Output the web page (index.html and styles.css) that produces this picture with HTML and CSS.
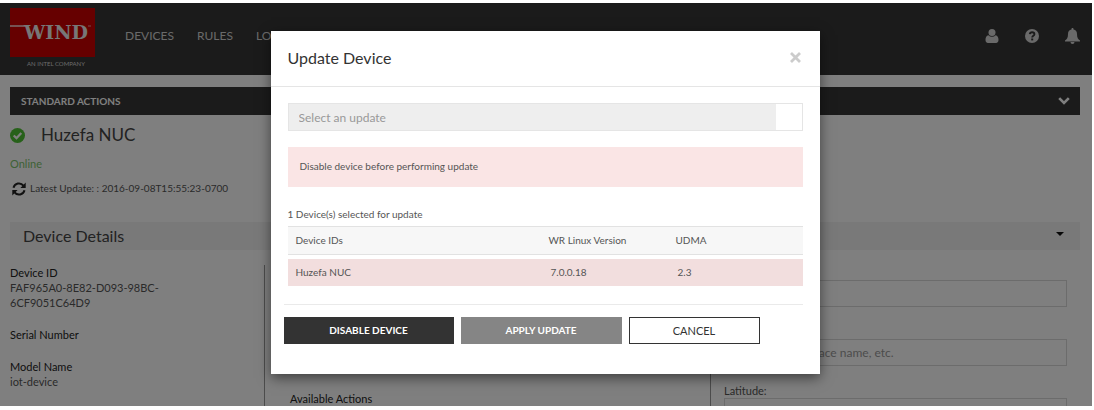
FILE: index.html
```html
<!DOCTYPE html>
<html lang="en">
<head>
<meta charset="utf-8">
<title>Update Device</title>
<link rel="stylesheet" href="styles.css">
</head>
<body>
<div class="app">
  <header class="topbar">
    <a class="brand" href="#">
      <svg class="brand-mark" viewBox="0 0 85 49" role="img" aria-label="Wind">
        <rect width="85" height="49" fill="#cc0000"/>
        <path d="M0 18H17" stroke="#fff" stroke-width="1.3"/>
        <text x="14" y="31" class="brand-word">WIND</text>
        <path d="M78 18h3" stroke="#fff" stroke-width="1" opacity=".6"/>
      </svg>
      <span class="brand-tag">AN INTEL COMPANY</span>
    </a>
    <nav class="nav">
      <a href="#">DEVICES</a>
      <a href="#">RULES</a>
      <a href="#">LO</a>
    </nav>
    <div class="tools">
      <button class="icon-button" aria-label="Account">
        <svg width="14" height="14" viewBox="0 0 14 14" fill="currentColor"><circle cx="7" cy="3.6" r="3.5"/><path d="M3.4 6.2C1.2 6.6.5 8.600.5 11c0 1.700.9 2.900 2.500 2.900h8c1.600 0 2.500-1.200 2.500-2.900 0-2.400-.7-4.400-2.900-4.800a5 5 0 0 1-7.200 0z"/></svg>
      </button>
      <button class="icon-button" aria-label="Help">
        <svg width="14" height="14" viewBox="0 0 14 14"><circle cx="7" cy="7" r="7" fill="currentColor"/><path d="M4.800 5.200C5 3.900 5.900 3.300 7.100 3.300c1.300 0 2.300.8 2.300 1.900 0 1.700-2.200 1.600-2.200 3.300" fill="none" stroke="#363636" stroke-width="1.900"/><rect x="6.200" y="9.500" width="2" height="1.900" fill="#363636"/></svg>
      </button>
      <button class="icon-button" aria-label="Notifications">
        <svg width="15" height="16" viewBox="0 0 15 16" fill="currentColor"><path d="M7.500 0c.6 0 1 .4 1 1v.6c2.300.4 3.500 2.200 3.500 4.400 0 3.800 1.100 5.400 3 6.500v.9H0v-.9c1.900-1.100 3-2.700 3-6.500 0-2.200 1.200-4 3.500-4.400V1c0-.6.4-1 1-1zM5.500 14h4a2 2 0 0 1-4 0z"/></svg>
      </button>
    </div>
  </header>

  <main class="content">
    <button class="actions-bar">
      <span>STANDARD ACTIONS</span>
      <svg width="12" height="8" viewBox="0 0 12 8" fill="none" stroke="#fff" stroke-width="2.600"><path d="M1.200 1.200 6 6l4.800-4.800"/></svg>
    </button>
    <div class="device-title">
      <svg width="15" height="15" viewBox="0 0 15 15"><circle cx="7.500" cy="7.500" r="7.500" fill="#4fc234"/><path d="M3.700 7.500 6.500 10.200 11.300 5" fill="none" stroke="#fff" stroke-width="2.300"/></svg>
      <h1>Huzefa NUC</h1>
    </div>
    <p class="status">Online</p>
    <p class="updated">
      <svg width="14" height="14" viewBox="0 0 14 14"><g fill="none" stroke="#222" stroke-width="2"><path d="M1.500 5.800A5.600 5.600 0 0 1 11.400 3.600"/><path d="M12.500 8.200A5.600 5.600 0 0 1 2.600 10.400"/></g><path d="M13.700.6v5.300H8.400zM.3 13.400V8.100h5.300z" fill="#222"/></svg>
      <span>Latest Update: : 2016-09-08T15:55:23-0700</span>
    </p>
    <button class="section-head">
      <span>Device Details</span>
      <svg width="8" height="4" viewBox="0 0 8 4"><path d="M0 0h8L4 4z" fill="#111"/></svg>
    </button>
    <div class="details">
      <dl class="col facts">
        <div><dt>Device ID</dt><dd>FAF965A0-8E82-D093-98BC-6CF9051C64D9</dd></div>
        <div><dt>Serial Number</dt><dd></dd></div>
        <div><dt>Model Name</dt><dd>iot-device</dd></div>
      </dl>
      <section class="col available">
        <h2>Available Actions</h2>
      </section>
      <form class="col location">
        <input class="field" type="text" aria-label="Name">
        <input class="field" type="text" aria-label="Place" placeholder="Enter address, place name, etc.">
        <div class="labelled">
          <label for="lat">Latitude:</label>
          <input class="field" id="lat" type="text">
        </div>
      </form>
    </div>
  </main>

  <div class="backdrop">
    <div class="modal" role="dialog" aria-labelledby="modal-title">
      <div class="modal-head">
        <h2 id="modal-title">Update Device</h2>
        <button class="close" aria-label="Close">
          <svg width="11" height="11" viewBox="0 0 11 11" stroke="#ccc" stroke-width="2.800"><path d="M1 1l9 9M10 1l-9 9"/></svg>
        </button>
      </div>
      <div class="modal-body">
        <div class="picker">
          <input type="text" aria-label="Update" placeholder="Select an update" disabled>
          <button aria-label="Show updates"></button>
        </div>
        <p class="alert">Disable device before performing update</p>
        <p class="count">1 Device(s) selected for update</p>
        <table class="devices">
          <thead>
            <tr><th class="c-id">Device IDs</th><th class="c-ver">WR Linux Version</th><th>UDMA</th></tr>
          </thead>
          <tbody>
            <tr class="gap"><td colspan="3"></td></tr>
            <tr class="row"><td>Huzefa NUC</td><td>7.0.0.18</td><td>2.3</td></tr>
          </tbody>
        </table>
      </div>
      <div class="modal-foot">
        <button class="btn dark">DISABLE DEVICE</button>
        <button class="btn muted">APPLY UPDATE</button>
        <button class="btn light">CANCEL</button>
      </div>
    </div>
  </div>
</div>
</body>
</html>
```
FILE: styles.css
```css
* { box-sizing: border-box; }

body {
  margin: 0;
  padding: 3px 2px 4px 0;
  background: #fff;
  color: #555;
  font: 12px/15px Lato, "Liberation Sans", sans-serif;
}

h1, h2, p, dl, dd { margin: 0; font-weight: 400; }
button, input { font: inherit; color: inherit; border-radius: 0; }
button { border: 0; padding: 0; background: none; }
a { color: inherit; text-decoration: none; }
svg { display: block; flex: none; }

.app {
  position: relative;
  height: calc(100vh - 7px);
  overflow: hidden;
  background: #fff;
}

.topbar {
  display: flex;
  height: 72px;
  padding: 5px 12px 0 10px;
  background: #363636;
  color: #d4d4d4;
}
.brand { width: 85px; }
.brand-mark { width: 85px; height: 49px; }
.brand-word { font: bold 19px "DejaVu Serif", serif; fill: #eee; }
.brand-tag {
  display: block;
  padding-left: 7px;
  font-size: 6px;
  line-height: 14px;
  text-align: center;
}
.nav { display: flex; gap: 23px; margin: 19px 0 0 30px; font-size: 12px; line-height: 17px; }
.tools { display: flex; align-items: center; gap: 26px; height: 56px; margin-left: auto; }

.content { padding: 12px 12px 0 10px; }
.actions-bar {
  display: flex;
  align-items: center;
  justify-content: space-between;
  width: 100%;
  height: 28px;
  padding: 0 10px 0 11px;
  background: #363636;
  color: #fff;
  font-size: 10px;
  font-weight: 700;
}
.device-title { display: flex; align-items: center; gap: 16px; height: 40px; }
h1 { color: #444; font-size: 17px; line-height: 20px; }
.status { margin-top: 1px; color: #7cc46c; font-size: 11px; }
.updated { display: flex; align-items: center; gap: 4px; margin-top: 10px; padding-left: 2px; font-size: 10px; }
.section-head {
  display: flex;
  align-items: center;
  justify-content: space-between;
  width: 100%;
  height: 28px;
  margin-top: 26px;
  padding: 0 16px 2px 13px;
  background: #f2f2f2;
  color: #444;
  font-size: 16px;
}
.section-head svg { margin-bottom: 2px; }
.details {
  display: grid;
  grid-template-columns: 255px 446px 1fr;
  margin-top: 15px;
}
.col { min-height: 160px; border-right: 1px solid #999; }
.col:last-child { border: 0; }
.facts { display: flex; flex-direction: column; gap: 17px; font-size: 11px; }
.facts dt { color: #222; }
.facts dd { max-width: 160px; overflow-wrap: break-word; }
.available { padding: 126px 25px 0; color: #222; }
.available h2 { font-size: 11px; line-height: 15px; }
.location { display: flex; flex-direction: column; gap: 32px; padding: 15px 13px 0; }
.field { display: block; width: 100%; height: 27px; padding: 0 7px; border: 1px solid #d8d8d8; background: #fff; }
.field::placeholder { color: #999; }
.labelled { display: flex; flex-direction: column; margin-top: -15px; }
.labelled label { font-size: 11px; }

.backdrop {
  position: absolute;
  inset: 0;
  display: flex;
  align-items: flex-start;
  justify-content: center;
  padding: 28px 2px 0 0;
  background: rgba(0, 0, 0, 0.5);
}
.modal {
  width: 549px;
  background: #fff;
  box-shadow: 0 4px 12px rgba(0, 0, 0, 0.5);
  font-size: 10px;
}
.modal-head {
  display: flex;
  align-items: center;
  justify-content: space-between;
  height: 56px;
  padding: 0 19px 2px 17px;
  border-bottom: 1px solid #e5e5e5;
}
.modal-head h2 { color: #333; font-size: 16px; line-height: 20px; }
.modal-body { padding: 16px 17px 0; }
.picker { display: flex; height: 28px; border: 1px solid #e5e5e5; }
.picker input { flex: 1; min-width: 0; padding: 0 10px; border: 0; background: #eee; font-size: 12px; }
.picker input::placeholder { color: #999; }
.picker button { width: 26px; }
.alert { margin-top: 16px; padding: 12px 12px 13px; background: #fae5e5; }
.count { margin-top: 20px; }
.devices { width: 100%; margin-top: 4px; border-collapse: collapse; table-layout: fixed; }
.devices th { height: 28px; padding: 0 8px; border: solid #e2e2e2; border-width: 1px 0; background: #f7f7f7; font-weight: 400; text-align: left; }
.devices .c-id { width: 253px; }
.devices .c-ver { width: 127px; }
.devices td { padding: 0 8px; }
.devices td + td { padding-left: 10px; }
.gap td { height: 4px; }
.row td { height: 27px; background: #f2dede; }
.modal-foot {
  display: flex;
  gap: 7px;
  margin: 18px 17px 0 13px;
  padding: 12px 0 30px;
  border-top: 1px solid #eaeaea;
}
.btn { height: 27px; border: 1px solid #333; font-size: 10px; }
.dark { width: 170px; background: #333; color: #fff; font-weight: 700; }
.muted { width: 161px; border-color: #858585; background: #858585; color: #fff; font-weight: 700; }
.light { width: 131px; background: #fff; color: #333; font-size: 11px; }
```
